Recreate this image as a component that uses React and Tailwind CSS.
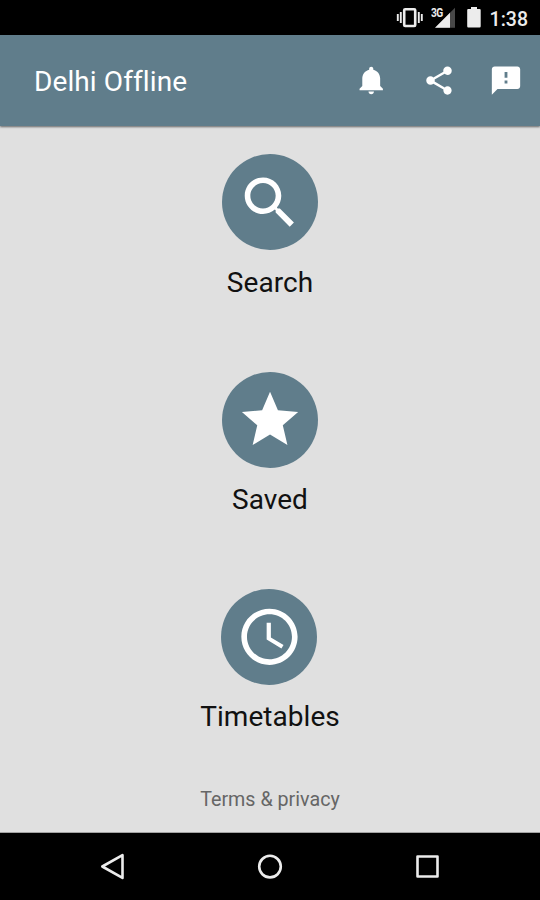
import React from "react";

const menuItems = [
  {
    label: "Search",
    icon: "M15.5 14h-.79l-.28-.27C15.41 12.59 16 11.11 16 9.5 16 5.91 13.09 3 9.5 3S3 5.91 3 9.5 5.91 16 9.5 16c1.61 0 3.09-.59 4.23-1.57l.27.28v.79l5 4.99L20.49 19l-4.99-5zm-6 0C7.01 14 5 11.99 5 9.5S7.01 5 9.5 5 14 7.01 14 9.5 11.99 14 9.5 14z",
    viewBox: "-0.1 0 24 24",
  },
  {
    label: "Saved",
    icon: "M12 17.27L18.18 21l-1.64-7.03L22 9.24l-7.19-.61L12 2 9.19 8.63 2 9.24l5.46 4.73L5.82 21z",
    viewBox: "-0.1 0 24 24",
  },
  {
    label: "Timetables",
    icon: "M11.99 2C6.47 2 2 6.48 2 12s4.47 10 9.99 10C17.52 22 22 17.52 22 12S17.52 2 11.99 2zM12 20c-4.42 0-8-3.58-8-8s3.58-8 8-8 8 3.58 8 8-3.58 8-8 8zm.5-13H11v6l5.25 3.15.75-1.23-4.5-2.67z",
    viewBox: "0.1 0 24 24",
    nudge: true,
  },
];

const actions = [
  {
    name: "Notifications",
    size: 33,
    viewBox: "-0.3 0 24 24",
    icon: "M11.5 22c1.1 0 2-.9 2-2h-4c0 1.1.9 2 2 2zm6.5-6v-5.5c0-3.07-2.13-5.64-5-6.32V3.5c0-.83-.67-1.5-1.5-1.5S10 2.67 10 3.5v.68c-2.87.68-5 3.25-5 6.32V16l-2 2v1h17v-1l-2-2z",
  },
  {
    name: "Share",
    size: 34,
    viewBox: "0 0.3 24 24",
    icon: "M18 16.08c-.76 0-1.44.3-1.96.77L8.91 12.7c.05-.23.09-.46.09-.7s-.04-.47-.09-.7l7.05-4.11c.54.5 1.25.81 2.04.81 1.66 0 3-1.34 3-3s-1.34-3-3-3-3 1.34-3 3c0 .24.04.47.09.7L8.04 9.81C7.5 9.31 6.79 9 6 9c-1.66 0-3 1.34-3 3s1.34 3 3 3c.79 0 1.5-.31 2.04-.81l7.12 4.16c-.05.21-.08.43-.08.65 0 1.61 1.31 2.92 2.92 2.92s2.92-1.31 2.92-2.92-1.31-2.92-2.92-2.92z",
  },
  {
    name: "Feedback",
    size: 34,
    viewBox: "0 0.3 24 24",
    icon: "M20 2H4c-1.1 0-1.99.9-1.99 2L2 22l4-4h14c1.1 0 2-.9 2-2V4c0-1.1-.9-2-2-2zm-7 12h-2v-2h2v2zm0-4h-2V6h2v4z",
  },
];

const StatusBar = () => (
  <div className="flex h-[35px] shrink-0 items-start justify-end bg-black pr-3 text-[#ececec]">
    <svg width="27" height="35" viewBox="0 0 27 35" className="mr-2">
      <rect x="8.2" y="9.3" width="11" height="16.7" rx="1" fill="none" stroke="#ececec" strokeWidth="2.6" />
      <path d="M1.8 14v7M4.8 12v11M22.8 12v11M25.8 14v7" stroke="#ececec" strokeWidth="1.9" />
    </svg>
    <div className="flex w-[24px]">
      <span className="mt-[7px] w-[4px] origin-left scale-x-85 text-[12px] leading-[12px] font-bold tracking-[-0.6px]">
        3G
      </span>
      <svg width="20" height="35" viewBox="0 0 20 35" className="shrink-0">
        <path d="M20 7.7v20H0z" fill="#484848" />
        <path d="M15 12.7v15H0z" fill="#ececec" />
      </svg>
    </div>
    <svg width="14" height="35" viewBox="0 0 14 35" className="ml-3">
      <path d="M4 7h6v2h2.6q1.1 0 1.1 1.1v16.2q0 1.2-1.1 1.2H1.3q-1.1 0-1.1-1.2V10.1q0-1.1 1.1-1.1H4z" fill="#ececec" />
    </svg>
    <span className="mt-2 ml-[9px] text-[19.5px] leading-[24px] font-medium">
      1:38
    </span>
  </div>
);

const AppBar = () => (
  <header className="z-10 flex h-[91px] shrink-0 items-center bg-[#607d8b] pl-[34px] text-white shadow-[0_1px_2px_rgba(0,0,0,0.55)]">
    <h1 className="flex-1 pt-0.5 text-[28px] leading-8 tracking-[0.1px] [font-variant-ligatures:none]">
      Delhi Offline
    </h1>
    {actions.map((action) => (
      <button
        key={action.name}
        aria-label={action.name}
        className="flex w-[67.5px] items-center justify-center"
      >
        <svg
          width={action.size}
          height={action.size}
          viewBox={action.viewBox}
          fill="currentColor"
        >
          <path d={action.icon} />
        </svg>
      </button>
    ))}
  </header>
);

const NavBar = () => (
  <nav className="flex h-[67px] shrink-0 items-center justify-center gap-[125.5px] bg-black">
    <svg width="32" height="32" viewBox="0.5 0.5 32 32" fill="none" stroke="#ececec" strokeWidth="2.6" strokeLinejoin="round">
      <path d="M5.8 16 26 4.6v22.8z" />
    </svg>
    <svg width="32" height="32" viewBox="0 0.4 32 32" fill="none" stroke="#ececec" strokeWidth="2.6">
      <circle cx="16" cy="16" r="10.8" />
    </svg>
    <svg width="32" height="32" viewBox="0.5 0.5 32 32" fill="none" stroke="#ececec" strokeWidth="2.6" strokeLinejoin="round">
      <rect x="6" y="6" width="20" height="20" />
    </svg>
  </nav>
);

const App = () => {
  return (
    <div className="flex h-[900px] w-[540px] flex-col overflow-hidden bg-[#e0e0e0] font-[Roboto,sans-serif]">
      <StatusBar />
      <AppBar />
      <main className="flex flex-1 flex-col items-center border-b border-[#a3a3a3] pt-[28.45px]">
        {menuItems.map((item) => (
          <button
            key={item.label}
            className="flex h-[217.25px] shrink-0 flex-col items-center"
          >
            <span
              className={`flex size-24 items-center justify-center rounded-full bg-[#607d8b] ${
                item.nudge ? "-ml-px" : ""
              }`}
            >
              <svg width="67.5" height="67.5" viewBox={item.viewBox} fill="#fff">
                <path d={item.icon} />
              </svg>
            </span>
            <span className="mt-[16.15px] text-[28px] leading-8 tracking-[0.05px] text-[#111]">
              {item.label}
            </span>
          </button>
        ))}
        <a className="-mt-[18px] text-[19.7px] leading-6 text-[#666]">
          Terms &amp; privacy
        </a>
      </main>
      <NavBar />
    </div>
  );
};

export default App;
